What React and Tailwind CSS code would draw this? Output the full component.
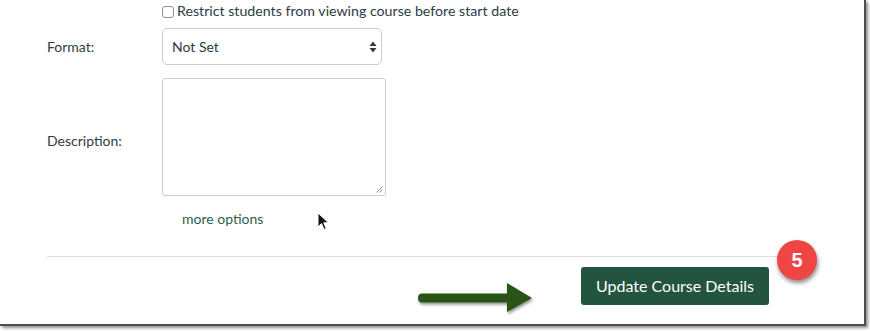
import React from "react";

export default function App() {
  return (
    <div className="w-[870px] h-[331px] bg-white overflow-hidden" style={{ fontFamily: "Lato, 'Noto Sans', sans-serif" }}>
      <div className="relative w-[866px] h-[326px] bg-white border-r-2 border-b-2 border-[#4d4d4d] shadow-[2px_2px_3px_rgba(0,0,0,0.45)] text-[#2d3b45]">
        <div className="pl-[47px]">
          {/* checkbox row */}
          <div className="h-[22px] flex items-center pl-[115px] gap-[3px] text-[14.2px]">
            <span className="w-[12px] h-[12px] border border-[#8a8f94] rounded-[3px] bg-white mt-[1px]" />
            <span>Restrict students from viewing course before start date</span>
          </div>
          {/* format row */}
          <div className="mt-[6px] flex items-center">
            <div className="w-[115px] text-[14px]">Format:</div>
            <div className="w-[220px] h-[37px] border border-[#c7cdd1] rounded-[5px] flex items-center justify-between pl-[9px] pr-[4px] text-[14px]">
              <span>Not Set</span>
              <svg width="8" height="12" viewBox="0 0 8 12">
                <path d="M4 0.5 L7.5 5 L0.5 5 Z" fill="#2d3b45" />
                <path d="M4 11.5 L7.5 7 L0.5 7 Z" fill="#2d3b45" />
              </svg>
            </div>
          </div>
          {/* description row */}
          <div className="mt-[13px] flex items-center">
            <div className="w-[115px] pt-[7px] text-[14px]">Description:</div>
            <div className="relative w-[224px] h-[118px] border border-[#c7cdd1] rounded-[3px]">
              <svg className="absolute right-[2px] bottom-[2px]" width="7" height="7" viewBox="0 0 7 7">
                <path d="M6.5 0.5 L0.5 6.5 M6.5 3.5 L3.5 6.5" stroke="#777" strokeWidth="0.8" />
              </svg>
            </div>
          </div>
          {/* more options */}
          <div className="h-[22px] mt-[11px] pl-[135px] flex items-center text-[14px] text-[#2b6148]">
            more options
          </div>
          {/* separator */}
          <div className="mt-[27px] w-[760px] border-t border-[#dcdfe2]" />
          {/* button row */}
          <div className="mt-[10px] pl-[534px]">
            <button className="w-[188px] h-[38px] rounded-[3px] bg-[#235440] text-white text-[16px] flex items-center justify-center">
              Update Course Details
            </button>
          </div>
        </div>

        {/* cursor */}
        <svg className="absolute left-[317px] top-[212px]" width="13" height="19" viewBox="0 0 13 19">
          <path d="M1 1 L1 15 L4.5 11.5 L7 17.5 L9.2 16.6 L6.8 10.8 L11.5 10.8 Z" fill="#111" stroke="#fff" strokeWidth="1" />
        </svg>

        {/* arrow annotation */}
        <svg className="absolute left-[414px] top-[279px]" width="124" height="38" viewBox="0 0 124 38">
          <defs>
            <filter id="sh" x="-10%" y="-30%" width="130%" height="170%">
              <feDropShadow dx="1" dy="2" stdDeviation="1.5" floodColor="#000" floodOpacity="0.45" />
            </filter>
          </defs>
          <g filter="url(#sh)">
            <path d="M8 14.5 L93 14.5 L93 4 L118 19 L93 33 L93 23.5 L8 23.5 Q4 23.5 4 19 Q4 14.5 8 14.5 Z" fill="#2a5219" />
          </g>
        </svg>

        {/* badge */}
        <div className="absolute left-[777px] top-[240px] w-[40px] h-[40px] rounded-full bg-[#f04545] shadow-[1px_3px_4px_rgba(0,0,0,0.45)] flex items-center justify-center text-white text-[20px] font-bold" style={{ fontFamily: "'Liberation Sans', Arial, sans-serif" }}>
          5
        </div>
      </div>
    </div>
  );
}
